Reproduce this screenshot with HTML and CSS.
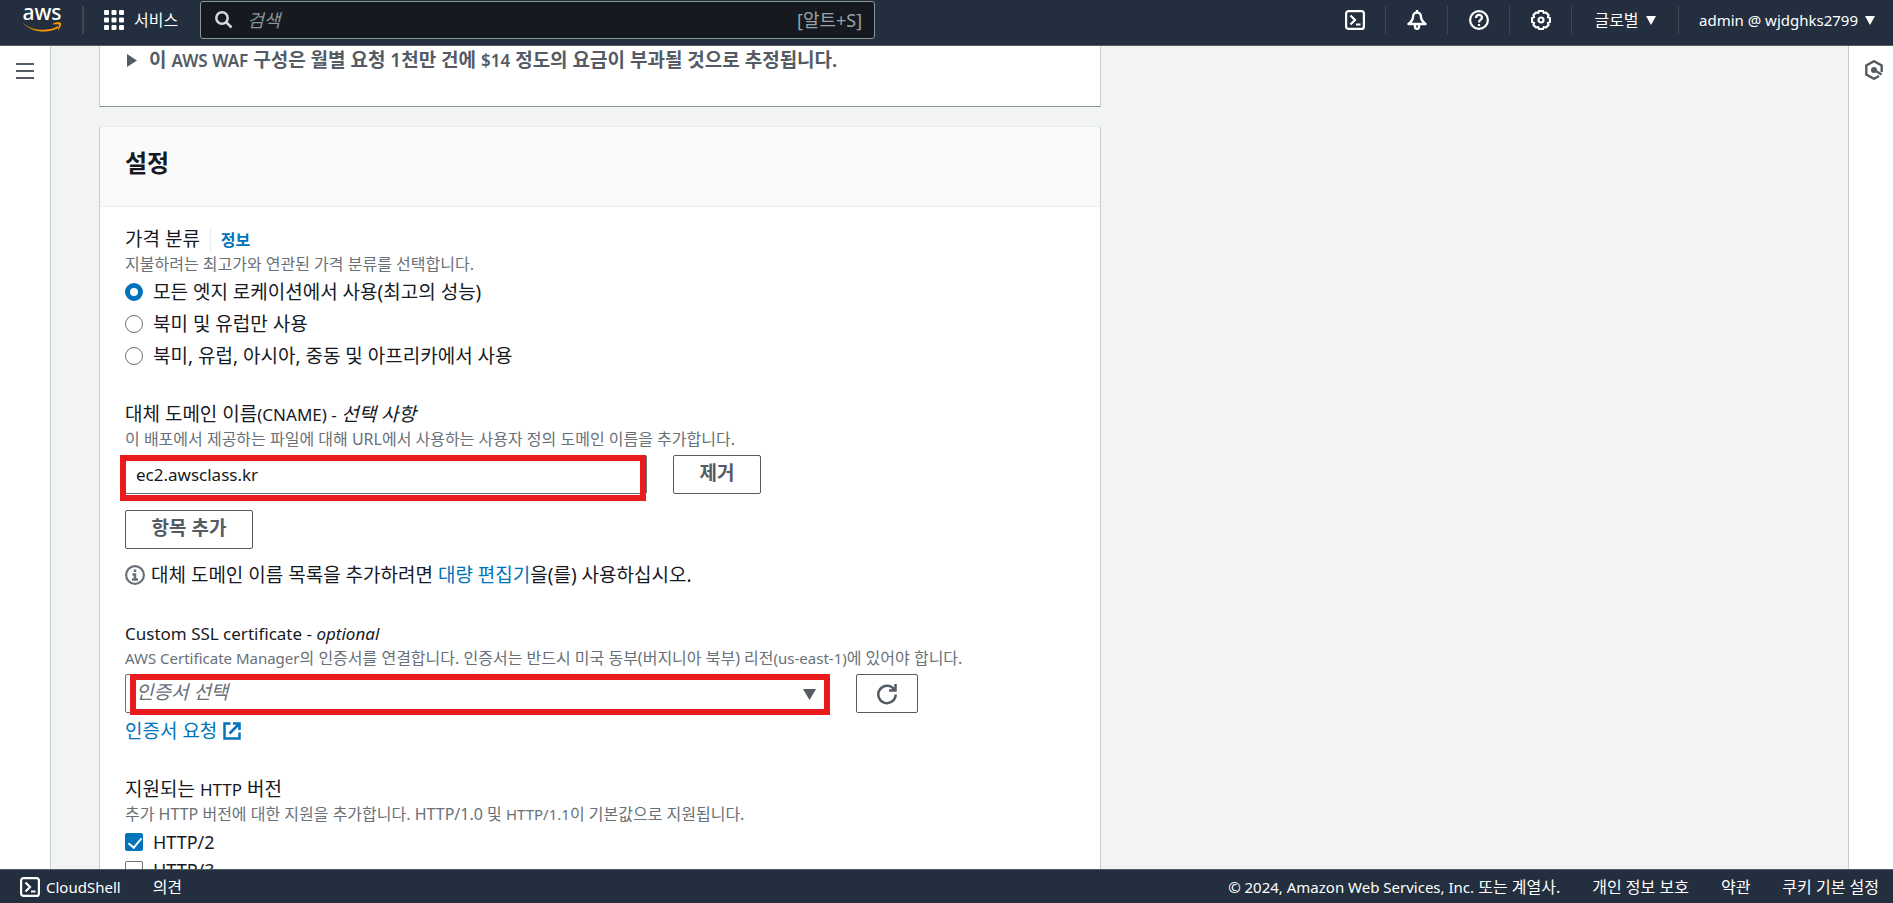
FILE: index.html
```html
<!DOCTYPE html>
<html lang="ko">
  <head>
    <meta charset="UTF-8">
    <meta name="viewport" content="width=device-width">
    <title>CloudFront</title>
    <link rel="stylesheet" href="styles.css">
  </head>

  <body>
    <header class="topbar">
      <a class="logo" href="#" aria-label="aws">
        <svg width="40" height="28" viewBox="0 0 40 28">
          <text class="logo-text" x="20" y="14" text-anchor="middle">aws</text>
          <path d="M1 17 C10 25 26 26 36 20 L37 21.500 C27 28 10 27 1 17Z" fill="#ff9900"/>
          <path d="M31 17.500 C34 16 38 16 39 17 C39.500 19 38 22 36.500 24 L36 23.500 C37 21 37.500 19 37 18.500 C36 18 33 18.500 31 18.500Z" fill="#ff9900"/>
        </svg>
      </a>
      <button class="services" type="button">
        <svg width="20" height="20" viewBox="0 0 20 20" fill="#fff">
          <rect x="0" y="0" width="5" height="5" rx="1"/><rect x="7.500" y="0" width="5" height="5" rx="1"/><rect x="15" y="0" width="5" height="5" rx="1"/>
          <rect x="0" y="7.500" width="5" height="5" rx="1"/><rect x="7.500" y="7.500" width="5" height="5" rx="1"/><rect x="15" y="7.500" width="5" height="5" rx="1"/>
          <rect x="0" y="15" width="5" height="5" rx="1"/><rect x="7.500" y="15" width="5" height="5" rx="1"/><rect x="15" y="15" width="5" height="5" rx="1"/>
        </svg>
        서비스
      </button>
      <label class="search">
        <svg width="18" height="18" viewBox="0 0 18 18" fill="none" stroke="#d5dbdb" stroke-width="2.500">
          <circle cx="7" cy="7" r="5.700"/><path d="M11 11 L16.500 16.500"/>
        </svg>
        <input type="search" placeholder="검색" aria-label="검색">
        <span>[알트+S]</span>
      </label>
      <nav class="tools">
        <button type="button" aria-label="CloudShell">
          <svg width="20" height="20" viewBox="0 0 20 20" fill="none" stroke="#fff" stroke-width="2.200">
            <rect x="1.100" y="1.100" width="17.800" height="17.800" rx="2.500"/><path d="M5.500 5.500 L10 10 L5.500 14.500 M11 14.500 H15.500"/>
          </svg>
        </button>
        <button type="button" aria-label="알림">
          <svg width="20" height="20" viewBox="0 0 20 20" fill="none" stroke="#fff" stroke-width="2.400" stroke-linejoin="round">
            <path d="M10 0 V3 M10 2.500 C7 2.500 6 5 6 7 C6 10 4.500 11.500 1.500 14 H18.500 C15.500 11.500 14 10 14 7 C14 5 13 2.500 10 2.500Z"/><path d="M8 14.500 V17 C8 19.500 12 19.500 12 17 V14.500"/>
          </svg>
        </button>
        <button type="button" aria-label="도움말">
          <svg width="20" height="20" viewBox="0 0 20 20" fill="none" stroke="#fff" stroke-width="2.200">
            <circle cx="10" cy="10" r="8.900"/><path d="M7 8 C7 4 13 4 13 7.500 C13 10 10 9.500 10 12.500 M10 14 V16"/>
          </svg>
        </button>
        <button type="button" aria-label="설정">
          <svg width="20" height="20" viewBox="0 0 20 20" fill="none" stroke="#fff" stroke-width="2.200" stroke-linejoin="round">
            <path d="M8 1 H12 L12.700 3 L15 2.500 L17.500 5 L17 7.300 L19 8 V12 L17 12.700 L17.500 15 L15 17.500 L12.700 17 L12 19 H8 L7.300 17 L5 17.500 L2.500 15 L3 12.700 L1 12 V8 L3 7.300 L2.500 5 L5 2.500 L7.300 3Z"/><circle cx="10" cy="10" r="2.500"/>
          </svg>
        </button>
        <button class="menu" type="button">글로벌
          <svg width="10" height="9" viewBox="0 0 10 9" fill="#fff"><path d="M0 0 H10 L5 9Z"/></svg>
        </button>
        <button class="menu account" type="button">admin @ wjdghks2799
          <svg width="10" height="9" viewBox="0 0 10 9" fill="#fff"><path d="M0 0 H10 L5 9Z"/></svg>
        </button>
      </nav>
    </header>

    <div class="page">
      <aside class="side side-left">
        <button type="button" aria-label="메뉴">
          <svg width="18" height="16" viewBox="0 0 18 16" stroke="#545b64" stroke-width="2"><path d="M0 1 H18 M0 8 H18 M0 15 H18"/></svg>
        </button>
      </aside>

      <main class="content">
        <section class="card card-waf">
          <details>
            <summary>
              <svg width="10" height="13" viewBox="0 0 10 13" fill="#545b64"><path d="M0 0 L10 6.500 L0 13Z"/></svg>
              <span>이 <span class="en">AWS WAF</span> 구성은 월별 요청 1천만 건에 <span class="en">$14</span> 정도의 요금이 부과될 것으로 추정됩니다.</span>
            </summary>
          </details>
        </section>

        <section class="card">
          <div class="card-header"><h2>설정</h2></div>
          <form class="card-body">
            <fieldset class="field">
              <legend>가격 분류 <a class="info-link" href="#">정보</a></legend>
              <p class="hint">지불하려는 최고가와 연관된 가격 분류를 선택합니다.</p>
              <div class="options">
                <label><input type="radio" name="price" checked> 모든 엣지 로케이션에서 사용(최고의 성능)</label>
                <label><input type="radio" name="price"> 북미 및 유럽만 사용</label>
                <label><input type="radio" name="price"> 북미, 유럽, 아시아, 중동 및 아프리카에서 사용</label>
              </div>
            </fieldset>

            <div class="field">
              <label class="title" for="cname">대체 도메인 이름<span class="en">(CNAME) - </span><i>선택 사항</i></label>
              <p class="hint">이 배포에서 제공하는 파일에 대해 URL에서 사용하는 사용자 정의 도메인 이름을 추가합니다.</p>
              <div class="row">
                <div class="control control-cname">
                  <input id="cname" type="text" value="ec2.awsclass.kr">
                  <span class="mark mark-cname"></span>
                </div>
                <button class="btn" type="button">제거</button>
              </div>
              <button class="btn btn-add" type="button">항목 추가</button>
              <p class="note">
                <svg width="20" height="20" viewBox="0 0 20 20" fill="none" stroke="#687078" stroke-width="2.200">
                  <circle cx="10" cy="10" r="8.900"/><path d="M10 4.500 V7 M7.500 9.500 H10 V14 M7 14.500 H13" stroke-width="2.500"/>
                </svg>
                <span>대체 도메인 이름 목록을 추가하려면 <a href="#">대량 편집기</a>을(를) 사용하십시오.</span>
              </p>
            </div>

            <div class="field">
              <label class="title" for="cert"><span class="en">Custom SSL certificate - <i>optional</i></span></label>
              <p class="hint"><span class="en-small">AWS Certificate Manager</span>의 인증서를 연결합니다. 인증서는 반드시 미국 동부(버지니아 북부) 리전<span class="en-small">(us-east-1)</span>에 있어야 합니다.</p>
              <div class="row">
                <div class="control control-cert">
                  <select id="cert"><option>인증서 선택</option></select>
                  <svg class="arrow" width="13" height="11" viewBox="0 0 13 11" fill="#545b64"><path d="M0 0 H13 L6.500 11Z"/></svg>
                  <span class="mark mark-cert"></span>
                </div>
                <button class="btn btn-refresh" type="button" aria-label="새로 고침">
                  <svg width="22" height="22" viewBox="0 0 22 22" fill="none" stroke="#545b64" stroke-width="2.500">
                    <path d="M18.500 7 A8.700 8.700 0 1 0 19.700 11.500"/><path d="M19.500 1 V7.500 H13"/>
                  </svg>
                </button>
              </div>
              <a class="request" href="#">인증서 요청
                <svg width="18" height="18" viewBox="0 0 18 18" fill="none" stroke="#0073bb" stroke-width="2.500">
                  <path d="M7.500 1.500 H1.500 V16.500 H16.500 V10.500 M10 1.500 H16.500 V8 M16.500 1.500 L6.500 11.500"/>
                </svg>
              </a>
            </div>

            <fieldset class="field">
              <legend>지원되는 <span class="en">HTTP</span> 버전</legend>
              <p class="hint">추가 HTTP 버전에 대한 지원을 추가합니다. HTTP/1.0 및 <span class="en-small">HTTP/1.1</span>이 기본값으로 지원됩니다.</p>
              <div class="options checks">
                <label><input type="checkbox" checked> HTTP/2</label>
                <label><input type="checkbox"> HTTP/3</label>
              </div>
            </fieldset>
          </form>
        </section>
      </main>

      <aside class="side side-right">
        <button type="button" aria-label="리소스">
          <svg width="18" height="20" viewBox="0 0 18 20" fill="none" stroke="#545b64" stroke-width="2.400">
            <path d="M16.700 12 V5.500 L9 1.200 L1.300 5.500 V14.500 L9 18.800 L14 16"/><path d="M9 10 L16.700 14.500"/><circle cx="9" cy="10" r="1.800" fill="#545b64"/>
          </svg>
        </button>
      </aside>
    </div>

    <footer class="footer">
      <button class="shell" type="button">
        <svg width="20" height="20" viewBox="0 0 20 20" fill="none" stroke="#fff" stroke-width="2.200">
          <rect x="1.100" y="1.100" width="17.800" height="17.800" rx="2.500"/><path d="M5.500 5.500 L10 10 L5.500 14.500 M11 14.500 H15.500"/>
        </svg>
        CloudShell
      </button>
      <a href="#">의견</a>
      <span class="copyright"><span class="company">© 2024, Amazon Web Services, Inc.</span> 또는 계열사.</span>
      <a href="#">개인 정보 보호</a>
      <a href="#">약관</a>
      <a href="#">쿠키 기본 설정</a>
    </footer>
  </body>
</html>
```
FILE: styles.css
```css
* {
  box-sizing: border-box;
}

body {
  display: flex;
  flex-direction: column;
  height: 100vh;
  margin: 0;
  overflow: hidden;
  font-family: "Noto Sans", "Noto Sans CJK KR", sans-serif;
  font-size: 19px;
  line-height: 24px;
  color: #16191f;
  background: #f2f3f3;
}

button, input, select {
  font: inherit;
  color: inherit;
}

button {
  padding: 0;
  border: 0;
  background: none;
  cursor: pointer;
}

a {
  color: #0073bb;
  text-decoration: none;
}

svg {
  flex: none;
}

h2, p {
  margin: 0;
}

/* top bar */
.topbar {
  display: flex;
  align-items: flex-start;
  flex: none;
  height: 46px;
  padding-top: 1px;
  background: #232f3e;
  border-bottom: 1px solid #545b64;
  color: #fff;
  font-size: 16px;
}

.logo {
  display: flex;
  height: 28px;
  margin-top: 5px;
  padding: 0 20px 0 22px;
  border-right: 2px solid #414750;
}

.logo svg {
  overflow: visible;
}

.logo-text {
  fill: #fff;
  font-size: 21px;
  font-weight: 500;
}

.services {
  display: flex;
  align-items: center;
  gap: 10px;
  height: 38px;
  margin: 0 22px 0 20px;
}

.search {
  display: flex;
  align-items: center;
  gap: 14px;
  width: 675px;
  height: 38px;
  padding: 0 12px 0 14px;
  border: 1px solid #879596;
  border-radius: 3px;
  background: #161920;
  color: #95a5a6;
  font-size: 18px;
}

.search input {
  flex: 1;
  min-width: 0;
  padding: 0;
  border: 0;
  outline: 0;
  background: none;
}

.search input::placeholder {
  color: #879596;
  font-style: italic;
}

.tools {
  display: flex;
  height: 28px;
  margin-top: 5px;
  margin-left: auto;
}

.tools button {
  display: flex;
  align-items: center;
  justify-content: center;
  gap: 7px;
  width: 62px;
  border-right: 1px solid #414750;
}

.tools .menu {
  width: 107px;
}

.tools .account {
  width: auto;
  padding: 0 18px 0 20px;
  border: 0;
  font-size: 15px;
}

/* columns */
.page {
  display: flex;
  flex: 1;
  min-height: 0;
}

.side {
  flex: none;
  padding-top: 14px;
  background: #fff;
  text-align: center;
}

.side-left {
  width: 51px;
  border-right: 1px solid #c4cccc;
}

.side-right {
  width: 45px;
  padding-left: 5px;
  border-left: 1px solid #c4cccc;
}

.content {
  flex: 1;
  min-width: 0;
  padding: 0 48px;
  overflow: hidden;
}

.card {
  max-width: 1002px;
  margin-bottom: 19px;
  background: #fff;
  border: 1px solid #c4cccc;
  border-top-color: #eaeded;
}

.card-waf {
  height: 61px;
  padding-left: 27px;
  border-top: 0;
  border-bottom-color: #879596;
}

.card-waf summary {
  display: flex;
  align-items: center;
  gap: 12px;
  height: 29px;
  list-style: none;
  color: #545b64;
  font-weight: 600;
}

.card-header {
  padding: 20px 25px 27px;
  background: #fafafa;
  border-bottom: 1px solid #eaeded;
}

.card-header h2 {
  font-size: 24px;
  font-weight: 600;
  line-height: 32px;
}

.card-body {
  padding: 20px 25px;
}

/* form fields */
.field {
  margin: 0 0 34px;
  padding: 0;
  border: 0;
}

.field legend {
  padding: 0;
}

.title {
  display: block;
}

.en {
  font-size: 17px;
}

.en-small {
  font-size: 15px;
}

.info-link {
  display: inline-block;
  margin-left: 5px;
  padding-left: 10px;
  border-left: 1px solid #eaeded;
  font-size: 16px;
  font-weight: 600;
}

.hint {
  margin-bottom: 4px;
  color: #687078;
  font-size: 16px;
}

.options {
  display: flex;
  flex-direction: column;
  gap: 8px;
}

.options label {
  display: flex;
  align-items: center;
  gap: 10px;
}

.options input {
  flex: none;
  width: 18px;
  height: 18px;
  margin: 0;
  appearance: none;
  border: 1px solid #687078;
  background: #fff;
}

.options input[type=radio] {
  border-radius: 50%;
}

.options input[type=radio]:checked {
  border: 5px solid #0073bb;
}

.options input[type=checkbox] {
  border-radius: 2px;
}

.options input[type=checkbox]:checked {
  border-color: #0073bb;
  background: #0073bb;
}

.options input[type=checkbox]:checked::before {
  content: "";
  display: block;
  width: 6px;
  height: 11px;
  margin: 1px 5px;
  border: solid #fff;
  border-width: 0 2px 2px 0;
  transform: rotate(40deg);
}

.checks {
  gap: 4px;
  font-size: 18px;
}

.row {
  display: flex;
  gap: 26px;
}

.control {
  position: relative;
}

.control-cname {
  width: 522px;
}

.control-cert {
  width: 705px;
}

.control input, .control select {
  display: block;
  width: 100%;
  height: 39px;
  padding: 0 10px;
  appearance: none;
  border: 1px solid #687078;
  border-radius: 2px;
  background: #fff;
  font-size: 17px;
}

.control select {
  padding-bottom: 3px;
  color: #687078;
  font-size: 19px;
  font-style: italic;
}

.arrow {
  position: absolute;
  top: 15px;
  right: 14px;
  pointer-events: none;
}

/* red boxes drawn over the controls */
.mark {
  position: absolute;
  border: 6px solid #e81c1c;
  pointer-events: none;
}

.mark-cname {
  inset: 0 1px -7px -5px;
}

.mark-cert {
  inset: 0 0 -2px 5px;
}

.btn {
  display: flex;
  align-items: center;
  justify-content: center;
  width: 88px;
  height: 39px;
  padding-bottom: 3px;
  border: 1px solid #545b64;
  border-radius: 2px;
  color: #545b64;
  font-weight: 600;
}

.btn-add {
  width: 128px;
  margin: 16px 0 14px;
}

.btn-refresh {
  width: 62px;
  padding: 0;
}

.note {
  display: flex;
  align-items: center;
  gap: 6px;
}

.request {
  display: flex;
  align-items: center;
  gap: 6px;
  margin-top: 6px;
}

/* footer */
.footer {
  display: flex;
  align-items: center;
  flex: none;
  gap: 32px;
  height: 34px;
  padding: 0 14px 0 20px;
  background: #232f3e;
  border-top: 1px solid #545b64;
  color: #fff;
  font-size: 16px;
}

.footer a {
  color: #fff;
}

.shell {
  display: flex;
  align-items: center;
  gap: 6px;
  font-size: 15px;
}

.copyright {
  margin-left: auto;
}

.company {
  font-size: 15px;
}
```
